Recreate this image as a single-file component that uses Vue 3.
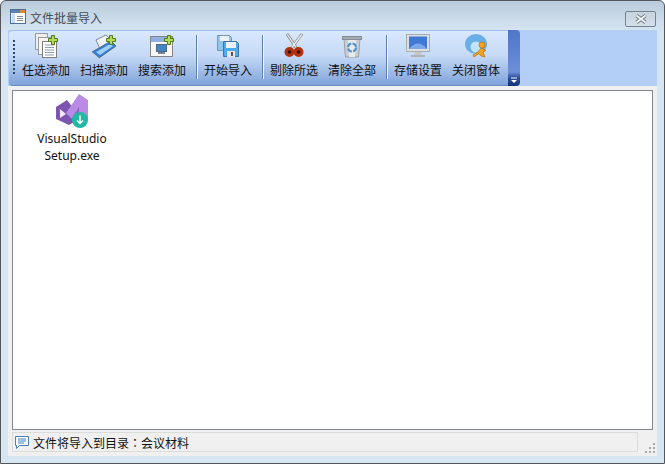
<script setup>
const tools = [
  [
    { label: '任选添加', icon: 'pick' },
    { label: '扫描添加', icon: 'scan' },
    { label: '搜索添加', icon: 'search' }
  ],
  [{ label: '开始导入', icon: 'save' }],
  [
    { label: '剔除所选', icon: 'cut' },
    { label: '清除全部', icon: 'bin' }
  ],
  [
    { label: '存储设置', icon: 'monitor' },
    { label: '关闭窗体', icon: 'run' }
  ]
]
</script>

<template>
  <div class="window">
    <header class="titlebar">
      <svg class="title-icon" width="16" height="16" viewBox="0 0 16 16">
        <rect x="0.5" y="0.5" width="15" height="14" fill="#fff" stroke="#4d6f96" />
        <rect x="1" y="1" width="14" height="3" fill="#5b82b8" />
        <rect x="10" y="1" width="5" height="3" fill="#e08a3c" />
        <rect x="1.5" y="4.5" width="3.5" height="9.5" fill="#c5dcf2" />
        <path d="M7 7.5h6M7 9.5h6M7 11.5h6" stroke="#7c8ea3" />
      </svg>
      <span class="title-text">文件批量导入</span>
      <button class="close">
        <svg width="14" height="10" viewBox="0 0 14 10">
          <path d="M2.5 1.5 L11.5 8.5 M11.5 1.5 L2.5 8.5" stroke="#6f7780" stroke-width="3.6" />
          <path d="M2.5 1.5 L11.5 8.5 M11.5 1.5 L2.5 8.5" stroke="#f4f6f8" stroke-width="1.8" />
        </svg>
      </button>
    </header>

    <div class="client">
      <div class="band">
        <div class="toolbar">
          <div class="grip"></div>
          <template v-for="(group, g) in tools" :key="g">
            <div v-if="g > 0" class="sep"></div>
            <div v-for="t in group" :key="t.label" class="tool">
              <svg class="tool-icon" width="32" height="26" viewBox="0 0 32 26">
                <template v-if="t.icon === 'pick'">
                  <rect x="5.5" y="0.5" width="12" height="16" fill="#eeeeee" stroke="#9a9a9a" />
                  <rect x="8.5" y="4.5" width="13" height="17" fill="#f6f6f6" stroke="#9a9a9a" />
                  <rect x="12.5" y="8.5" width="14" height="16" fill="#fff" stroke="#7d7d7d" />
                  <path d="M15 12h9M15 14.5h9M15 17h9M15 19.5h9M15 22h9" stroke="#8e9db5" />
                </template>
                <template v-if="t.icon === 'scan'">
                  <path d="M8 7 L18 2 L25 9 L13 18 Z" fill="#f1f3f6" stroke="#7d8794" />
                  <path d="M4 19 L23 8 L28 13 L11 25 Z" fill="#2f7fe0" stroke="#5a6b85" />
                  <path d="M8 19 L22 11 L25 13 L12 22 Z" fill="#9fd0fa" />
                  <path d="M4 19 L11 25 L11 26 L4 20.5 Z" fill="#c9ced6" />
                </template>
                <template v-if="t.icon === 'search'">
                  <rect x="4.5" y="3.5" width="22" height="20" fill="#f8f8f8" stroke="#848484" />
                  <rect x="5" y="4" width="21" height="5" fill="#8fb0e2" />
                  <rect x="10.5" y="11.5" width="10" height="7" fill="#3f86c8" stroke="#53677e" />
                  <rect x="12" y="19" width="7" height="2" fill="#7d8690" />
                </template>
                <template v-if="t.icon === 'save'">
                  <path d="M5.5 2.5h12l2 2v13h-14z" fill="#8fc6ec" stroke="#6f9abd" />
                  <rect x="8" y="3" width="9" height="5" fill="#edf2f6" />
                  <path d="M11.5 8.5h13l2 2v13h-15z" fill="#50a8ec" stroke="#3f74a8" />
                  <rect x="14" y="9" width="10" height="6" fill="#edf2f6" />
                  <rect x="15" y="18" width="8" height="6" fill="#e6e6e6" />
                  <rect x="19" y="19" width="2" height="4" fill="#555" />
                </template>
                <template v-if="t.icon === 'cut'">
                  <path d="M9 1 L18.500 15 M24 1 L13.500 15" stroke="#7f7f7f" stroke-width="2.800" />
                  <path d="M9.300 1.500 L18.500 15 M23.700 1.500 L13.500 15" stroke="#f5f5f5" stroke-width="1.300" />
                  <circle cx="11.500" cy="19" r="3.400" fill="#3c0f08" stroke="#b0300f" stroke-width="3.200" />
                  <circle cx="20.500" cy="19" r="3.400" fill="#3c0f08" stroke="#b0300f" stroke-width="3.200" />
                </template>
                <template v-if="t.icon === 'bin'">
                  <path d="M8 6h16l-1.500 18h-13z" fill="#c9ced3" stroke="#9aa0a6" />
                  <rect x="6.500" y="3.500" width="19" height="3" fill="#a5acb2" stroke="#858c92" />
                  <path d="M12 7l1 17h6l1-17z" fill="#e8ebee" />
                  <circle cx="16" cy="14.500" r="4" fill="none" stroke="#4a8fd0" stroke-width="2" stroke-dasharray="5 1.300" />
                </template>
                <template v-if="t.icon === 'monitor'">
                  <rect x="4.500" y="1.500" width="23" height="17" fill="#dcdfe2" stroke="#a9adb2" />
                  <rect x="7" y="3.500" width="18" height="12.500" fill="#3f79d6" />
                  <path d="M7 16 Q16 5 25 16z" fill="#7aa9ea" />
                  <path d="M13 19h6l1 3h-8z" fill="#c4c7cb" />
                  <rect x="9" y="22" width="14" height="2" fill="#aeb2b6" />
                </template>
                <template v-if="t.icon === 'run'">
                  <ellipse cx="16" cy="11" rx="11" ry="10" fill="#6aaee6" />
                  <ellipse cx="16" cy="14" rx="5.500" ry="5.500" fill="#bfe4fb" />
                  <circle cx="22" cy="12" r="3" fill="#f2a41c" stroke="#b06a10" stroke-width="0.6" />
                  <path d="M21 15 L26 17.500 L23 19 L25 24 L21 23 L19 20.500 L14 24 L13 22 L18 19 Z" fill="#f2a41c" stroke="#a8650e" stroke-width="0.6" />
                </template>
                <path
                  v-if="t.icon === 'pick' || t.icon === 'scan' || t.icon === 'search'"
                  d="M21.500 2.500h3v3h3v3h-3v3h-3v-3h-3v-3h3z"
                  fill="#b5da55"
                  stroke="#4d7a1c"
                />
              </svg>
              <span class="tool-label">{{ t.label }}</span>
            </div>
          </template>
        </div>
        <div class="chevron">
          <svg width="8" height="8" viewBox="0 0 8 8">
            <path d="M1 1h6" stroke="#fff" />
            <path d="M1 3h6L4 6z" fill="#fff" />
          </svg>
        </div>
      </div>

      <div class="list">
        <div class="file">
          <svg class="file-icon" width="36" height="34" viewBox="0 0 36 34">
            <path d="M1 13 L12 6 L26 24 L14 31 L1 25 Z" fill="#7d55b0" />
            <path d="M5 15 L11 20 L5 24 Z" fill="#efe9f7" />
            <path d="M11 19 L24 0 L33 6 L33 25 L24 29 L24 12 L17 25 Z" fill="#b98ae6" />
            <path d="M24 0 L24 29 L17 25 L24 12 Z" fill="#8e63c4" />
            <circle cx="25" cy="26" r="8" fill="#22b8a4" />
            <path d="M25 21.500v8M22 26.500l3 3 3-3" fill="none" stroke="#fff" stroke-width="1.400" />
          </svg>
          <span class="file-name">VisualStudio<br />Setup.exe</span>
        </div>
      </div>

      <footer class="status">
        <div class="status-box">
          <svg width="16" height="16" viewBox="0 0 16 16">
            <path d="M1.500 2.500h13v9h-9l-3 3v-3h-1z" fill="#fff" stroke="#4c7db4" />
            <path d="M4 5h8M4 7h8M4 9h6" stroke="#3b7fc4" />
          </svg>
          <span>文件将导入到目录<span class="colon">：</span>会议材料</span>
        </div>
        <svg class="resize" width="11" height="11" viewBox="0 0 11 11">
          <path d="M8 0h2v2H8zM4 4h2v2H4zM8 4h2v2H8zM0 8h2v2H0zM4 8h2v2H4zM8 8h2v2H8z" fill="#a8a8a8" />
        </svg>
      </footer>
    </div>
  </div>
</template>

<style>
html,
body {
  margin: 0;
  overflow: hidden;
}
</style>

<style scoped>
.window {
  width: 665px;
  height: 464px;
  box-sizing: border-box;
  border: 1px solid #53575c;
  border-radius: 6px 6px 0 0;
  background: linear-gradient(#b9cbdb 0, #d6e5f2 30px, #d6e5f2 100%);
  display: flex;
  flex-direction: column;
  font-family: "Noto Sans CJK SC", "Liberation Sans", sans-serif;
  font-size: 12px;
  color: #111;
}

.titlebar {
  height: 29px;
  flex: none;
  display: flex;
  align-items: center;
  padding: 0 8px 0 9px;
  gap: 4px;
}

.title-icon {
  margin-top: 3px;
}

.title-text {
  color: #444e59;
  margin-top: 4px;
}

.close {
  margin-left: auto;
  width: 31px;
  height: 16px;
  padding: 0;
  margin-top: 6px;
  border: 1px solid #77828f;
  border-radius: 2px;
  background: linear-gradient(#c6d3df, #d3e0ec);
  display: flex;
  align-items: center;
  justify-content: center;
}

.client {
  flex: 1;
  margin: 0 7px 7px;
  background: #f0f0f0;
  display: flex;
  flex-direction: column;
}

.band {
  height: 56px;
  flex: none;
  background: #b3cff8;
  display: flex;
  padding-left: 1px;
}

.toolbar {
  width: 499px;
  box-sizing: border-box;
  border-radius: 4px 0 0 4px;
  background: linear-gradient(#d9e8fd 0, #c6daf7 45%, #7fa3da 100%);
  border-top: 1px solid #9dbdee;
  border-bottom: 1px solid #6a8cc4;
  display: flex;
  padding-left: 4px;
}

.grip {
  width: 2px;
  height: 36px;
  margin: 9px 2px 0 0;
  background: repeating-linear-gradient(#27457f 0 2px, transparent 2px 4px);
}

.tool {
  width: 58px;
  display: flex;
  flex-direction: column;
  align-items: center;
}

.tool-icon {
  margin-top: 2px;
  flex: none;
}

.tool-label {
  line-height: 16px;
  margin-top: 3px;
  white-space: nowrap;
}

.sep {
  width: 1px;
  height: 44px;
  margin: 4px 2px 0 5px;
  background: #5d7fb2;
  box-shadow: 1px 0 0 #eef5ff;
}

.chevron {
  width: 12px;
  height: 56px;
  box-sizing: border-box;
  border-radius: 0 4px 4px 0;
  background: linear-gradient(#4f76c8 0, #6c8fd8 75%, #2e4f9a 85%, #12307a 100%);
  display: flex;
  align-items: flex-end;
  justify-content: center;
  padding-bottom: 1px;
}

.list {
  flex: 1;
  margin: 4px 4px 2px;
  background: #fff;
  border: 1px solid #828790;
  padding: 3px 0 0 13px;
}

.file {
  width: 92px;
  display: flex;
  flex-direction: column;
  align-items: center;
}

.file-icon {
  margin-left: 2px;
}

.file-name {
  font-family: "Noto Sans", "Liberation Sans", sans-serif;
  font-size: 12px;
  line-height: 17px;
  text-align: center;
  margin-top: 2px;
}

.status {
  height: 20px;
  flex: none;
  margin: 0 0 4px 4px;
  display: flex;
}

.status-box {
  width: 626px;
  box-sizing: border-box;
  border: 1px solid #dcdcd8;
  display: flex;
  align-items: center;
  gap: 3px;
  padding-left: 1px;
}

.colon {
  font-family: "Noto Sans CJK TC", sans-serif;
}

.resize {
  margin: 11px 0 0 7px;
}
</style>
